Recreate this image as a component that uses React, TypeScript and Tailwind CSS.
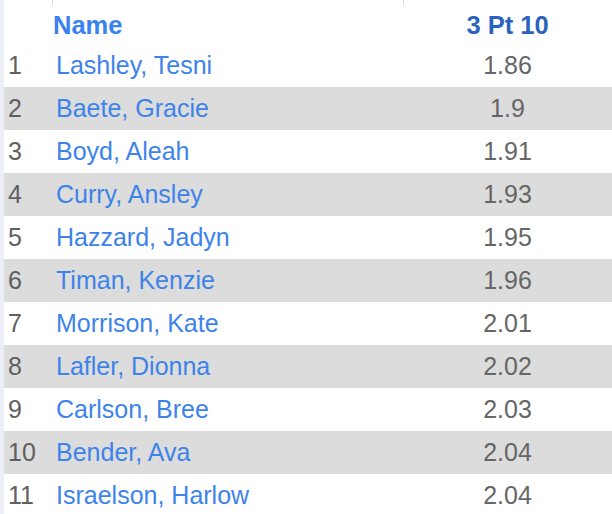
const rows = [
  { name: 'Lashley, Tesni', value: '1.86' },
  { name: 'Baete, Gracie', value: '1.9' },
  { name: 'Boyd, Aleah', value: '1.91' },
  { name: 'Curry, Ansley', value: '1.93' },
  { name: 'Hazzard, Jadyn', value: '1.95' },
  { name: 'Timan, Kenzie', value: '1.96' },
  { name: 'Morrison, Kate', value: '2.01' },
  { name: 'Lafler, Dionna', value: '2.02' },
  { name: 'Carlson, Bree', value: '2.03' },
  { name: 'Bender, Ava', value: '2.04' },
  { name: 'Israelson, Harlow', value: '2.04' },
];

export default function App() {
  return (
    <div className="flex h-[514px] w-[612px] overflow-hidden bg-white font-['Liberation_Sans',Arial,sans-serif]">
      <div className="w-[4px] shrink-0 bg-[#eceef5]" />
      <div className="flex min-w-0 flex-1 flex-col">
        {/* header */}
        <div className="relative flex h-[44px] shrink-0 items-center">
          <div className="absolute left-[48px] top-0 h-[5px] w-px bg-[#d8d8d8]" />
          <div className="absolute left-[399px] top-0 h-[5px] w-px bg-[#d8d8d8]" />
          <div className="w-[49px] shrink-0" />
          <div className="w-[350px] shrink-0 pt-[6px] text-[25.5px] font-bold text-[#3a82ef]">Name</div>
          <div className="flex-1 pt-[6px] text-center text-[25.5px] font-bold text-[#2a63bd]">3 Pt 10</div>
        </div>
        {rows.map((row, i) => (
          <div
            key={i}
            className={`flex h-[43px] shrink-0 items-center text-[25px] ${i % 2 === 1 ? 'bg-[#dcdcdc]' : 'bg-white'}`}
          >
            <div className="w-[52px] shrink-0 pl-[4px] text-[#606060]">{i + 1}</div>
            <div className="w-[347px] shrink-0 text-[#3d83ea]">{row.name}</div>
            <div className="flex-1 text-center text-[#666666]">{row.value}</div>
          </div>
        ))}
      </div>
    </div>
  );
}
